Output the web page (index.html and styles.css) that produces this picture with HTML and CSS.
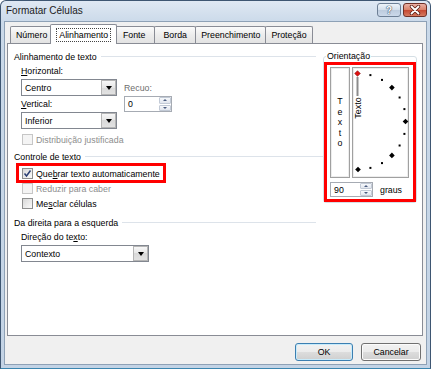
FILE: index.html
```html
<!DOCTYPE html>
<html lang="pt-BR">
<head>
    <meta charset="UTF-8">
    <title>Formatar Células</title>
    <link rel="stylesheet" href="styles.css">
</head>
<body>
    <div class="window">
        <div class="titlebar">
            <span class="title">Formatar Células</span>
            <div class="caption-buttons">
                <span class="cap-btn help">?</span>
                <span class="cap-btn close">
                    <svg width="12" height="10" viewBox="0 0 12 10">
                        <path d="M2.5 1.5 L9.5 8.5 M9.5 1.5 L2.5 8.5" stroke="#5a1f16" stroke-width="3.4" stroke-linecap="round"/>
                        <path d="M2.5 1.5 L9.5 8.5 M9.5 1.5 L2.5 8.5" stroke="#fff" stroke-width="1.8" stroke-linecap="round"/>
                    </svg>
                </span>
            </div>
        </div>

        <div class="client">
            <div class="tabs">
                <span class="tab">Número</span>
                <span class="tab active"><span class="focus">Alinhamento</span></span>
                <span class="tab">Fonte</span>
                <span class="tab">Borda</span>
                <span class="tab">Preenchimento</span>
                <span class="tab">Proteção</span>
            </div>

            <div class="panel">
                <div class="left-col">
                    <div class="group-head">Alinhamento de texto</div>
                    <div class="section align-grid">
                        <div class="field-col">
                            <div class="field-label"><u>H</u>orizontal:</div>
                            <div class="combo w-short">
                                <span class="combo-value">Centro</span>
                                <span class="combo-drop"><i class="tri"></i></span>
                            </div>
                            <div class="field-label gap1"><u>V</u>ertical:</div>
                            <div class="combo w-short">
                                <span class="combo-value">Inferior</span>
                                <span class="combo-drop"><i class="tri"></i></span>
                            </div>
                        </div>
                        <div class="field-col recuo">
                            <div class="field-label disabled">Recuo:</div>
                            <div class="spin">
                                <span class="spin-value">0</span>
                                <span class="spin-btns">
                                    <span class="spin-half"><i class="tri-up"></i></span>
                                    <span class="spin-half"><i class="tri-down"></i></span>
                                </span>
                            </div>
                        </div>
                    </div>
                    <div class="section">
                        <div class="check disabled first-check"><span class="box"></span>Distribuição justificada</div>
                    </div>

                    <div class="group-head wide gap2">Controle de texto</div>
                    <div class="section checks">
                        <div class="check annot">
                            <span class="box">
                                <svg width="9" height="9" viewBox="0 0 9 9"><path d="M1.5 4.5 L3.5 7 L7.5 1.5" fill="none" stroke="#2b3f73" stroke-width="1.5"/></svg>
                            </span>
                            <span>Que<u>b</u>rar texto automaticamente</span>
                        </div>
                        <div class="check disabled"><span class="box"></span>Reduzir para caber</div>
                        <div class="check"><span class="box"></span><span>Me<u>s</u>clar células</span></div>
                    </div>

                    <div class="group-head gap4">Da direita para a esquerda</div>
                    <div class="section">
                        <div class="field-label">Direção do te<u>x</u>to:</div>
                        <div class="combo w-long">
                            <span class="combo-value">Contexto</span>
                            <span class="combo-drop"><i class="tri"></i></span>
                        </div>
                    </div>
                </div>

                <div class="orient-group">
                    <div class="orient-title">Orientação</div>
                    <div class="orient-box">
                        <div class="dial-row">
                            <div class="texto-box">
                                <span>T</span><span>e</span><span>x</span><span>t</span><span>o</span>
                            </div>
                            <div class="dial">
                                <svg width="55" height="109" viewBox="0 0 55 109">
                                    <line x1="4.5" y1="9" x2="4.5" y2="28" stroke="#8c8c8c" stroke-width="2"/>
                                    <text transform="translate(7.5 40) rotate(-90)" text-anchor="middle" font-family="Liberation Sans, Arial, sans-serif" font-size="9" fill="#000">Texto</text>
                                    <g fill="#000">
                                        <rect x="16.4" y="6.1" width="2" height="2"/>
                                        <rect x="28" y="10.9" width="2" height="2"/>
                                        <rect x="45.6" y="28.5" width="2" height="2"/>
                                        <rect x="50.4" y="40.1" width="2" height="2"/>
                                        <rect x="50.4" y="64.9" width="2" height="2"/>
                                        <rect x="45.6" y="76.5" width="2" height="2"/>
                                        <rect x="28" y="94.1" width="2" height="2"/>
                                        <rect x="16.4" y="98.9" width="2" height="2"/>
                                        <polygon points="38.9,16.8 41.7,19.6 38.9,22.4 36.1,19.6"/>
                                        <polygon points="52.5,50.7 55.3,53.5 52.5,56.3 49.7,53.5"/>
                                        <polygon points="38.9,84.6 41.7,87.4 38.9,90.2 36.1,87.4"/>
                                        <polygon points="5,98.7 7.8,101.5 5,104.3 2.2,101.5"/>
                                    </g>
                                    <polygon points="4.5,2.7 7.3,5.5 4.5,8.3 1.7,5.5" fill="#e01010" stroke="#7a1010" stroke-width="0.6"/>
                                </svg>
                            </div>
                        </div>
                        <div class="deg-row">
                            <div class="spin w-deg">
                                <span class="spin-value">90</span>
                                <span class="spin-btns">
                                    <span class="spin-half"><i class="tri-up"></i></span>
                                    <span class="spin-half"><i class="tri-down"></i></span>
                                </span>
                            </div>
                            <span><u>g</u>raus</span>
                        </div>
                    </div>
                </div>
            </div>

            <div class="actions">
                <button class="btn default">OK</button>
                <button class="btn wide-btn">Cancelar</button>
            </div>
        </div>
    </div>
</body>
</html>
```

FILE: styles.css
```css
body {
    margin: 0;
    font-family: "Liberation Sans", Arial, sans-serif;
    font-size: 8.8px;
    color: #000;
    background: #fff;
}
u {
    text-decoration-thickness: 1px;
    text-underline-offset: 1px;
}
.window {
    width: 431px;
    height: 369px;
    box-sizing: border-box;
    border: 1px solid #3e5672;
    border-bottom-color: #3b86b0;
    border-radius: 6px 6px 0 0;
    background: linear-gradient(#dfe8f3, #cad9e9 22px, #c3d3e5);
    padding: 0 3px 3px;
    display: flex;
    flex-direction: column;
}
.titlebar {
    height: 20px;
    display: flex;
    justify-content: space-between;
    padding-left: 2px;
}
.title {
    font-size: 10px;
    line-height: 20px;
    color: #1b1b1b;
}
.caption-buttons {
    display: flex;
    gap: 2px;
    margin-top: 2px;
}
.cap-btn {
    width: 24px;
    height: 14px;
    box-sizing: border-box;
    border: 1px solid #6d7f95;
    border-radius: 3px;
    display: flex;
    align-items: center;
    justify-content: center;
}
.help {
    background: linear-gradient(#eef3f9, #d3deeb 50%, #bccbdd 50%, #cbd9ea);
    color: #fff;
    font-weight: bold;
    font-size: 10px;
    text-shadow: 0 0 1px #44566d, 0 0 1px #44566d, 0 0 1px #44566d;
}
.close {
    background: linear-gradient(#eab0a4, #d98068 50%, #c5462f 50%, #d57a60);
    border-color: #6e3027;
}
.client {
    flex: 1;
    background: #f0f0f0;
    border: 1px solid #8ea1b6;
    padding: 2px 3px 0 2px;
    display: flex;
    flex-direction: column;
}

/* tabs */
.tabs {
    display: flex;
    align-items: flex-end;
    height: 20px;
    padding-left: 4px;
    margin-bottom: -1px;
    position: relative;
    z-index: 1;
}
.tab {
    height: 17px;
    min-width: 42px;
    margin-bottom: 1px;
    margin-left: -1px;
    box-sizing: border-box;
    padding: 0 5px;
    border: 1px solid #898c95;
    border-bottom: none;
    border-radius: 2px 2px 0 0;
    background: linear-gradient(#fbfbfb, #ececec 50%, #e3e3e3);
    display: flex;
    align-items: center;
    justify-content: center;
}
.tab.active {
    height: 20px;
    margin: 0 -3px;
    padding: 0 5px;
    background: #fff;
    position: relative;
    z-index: 2;
}
.focus {
    border: 1px dotted #444;
    padding: 1px 2px;
}

/* panel */
.panel {
    height: 293px;
    box-sizing: border-box;
    border: 1px solid #898c95;
    background: #fff;
    padding: 5px 5px 0 6px;
    display: grid;
    grid-template-columns: 302px 94px;
    column-gap: 7px;
    align-items: start;
}
.left-col {
    display: flex;
    flex-direction: column;
}
.group-head {
    display: flex;
    align-items: center;
    gap: 4px;
    height: 15px;
}
.group-head::after {
    content: "";
    flex: 1;
    border-top: 1px solid #dde3ea;
}
.group-head.wide {
    margin-right: -7px;
}
.gap1 { margin-top: 1px; }
.gap2 { margin-top: 2px; }
.gap4 { margin-top: 4px; }
.section {
    padding-left: 7px;
    display: flex;
    flex-direction: column;
}
.align-grid {
    flex-direction: row;
    gap: 7px;
}
.field-col {
    display: flex;
    flex-direction: column;
}
.recuo {
    padding-top: 17px;
}
.field-label {
    height: 15px;
    line-height: 15px;
}
.disabled {
    color: #8d8d8d;
}
.field-label.disabled {
    color: #6d6d6d;
}

/* combo boxes */
.combo {
    display: flex;
    align-items: center;
    height: 17px;
    box-sizing: border-box;
    border: 1px solid #828790;
    background: #fff;
}
.w-short { width: 96px; }
.w-long { width: 128px; }
.combo-value {
    flex: 1;
    padding-left: 3px;
}
.combo-drop {
    width: 15px;
    height: 15px;
    box-sizing: border-box;
    border: 1px solid #b5b5b5;
    background: linear-gradient(#f7f7f7, #e6e6e6 50%, #d9d9d9 50%, #e2e2e2);
    display: flex;
    align-items: center;
    justify-content: center;
}
.tri {
    width: 0;
    height: 0;
    border-left: 3px solid transparent;
    border-right: 3px solid transparent;
    border-top: 4px solid #000;
}

/* spin boxes */
.spin {
    display: flex;
    width: 48px;
    height: 16px;
    box-sizing: border-box;
    border: 1px solid #a6abb3;
    background: #fff;
}
.w-deg {
    width: 43px;
    height: 15px;
}
.spin-value {
    flex: 1;
    padding-left: 3px;
    display: flex;
    align-items: center;
}
.spin-btns {
    width: 12px;
    display: flex;
    flex-direction: column;
    gap: 1px;
}
.spin-half {
    flex: 1;
    border: 1px solid #c2cad6;
    border-radius: 1px;
    background: linear-gradient(#f6f8fb, #e1e6ee);
    display: flex;
    align-items: center;
    justify-content: center;
}
.tri-up,
.tri-down {
    width: 0;
    height: 0;
    border-left: 2px solid transparent;
    border-right: 2px solid transparent;
}
.tri-up { border-bottom: 2px solid #4b5d80; }
.tri-down { border-top: 2px solid #4b5d80; }

/* checkboxes */
.check {
    display: flex;
    align-items: center;
    gap: 3px;
    height: 15px;
    padding-left: 1px;
}
.first-check {
    margin-top: 3px;
}
.checks {
    margin-top: 2px;
}
.box {
    width: 11px;
    height: 11px;
    box-sizing: border-box;
    border: 1px solid #8e8f8f;
    background: linear-gradient(135deg, #d8d8d8, #fbfbfb);
    display: flex;
    align-items: center;
    justify-content: center;
}
.check.disabled .box {
    border-color: #c6c6c6;
    background: #f4f4f4;
}
.annot {
    position: relative;
}
.annot::after {
    content: "";
    position: absolute;
    left: -5px;
    top: -3px;
    width: 150px;
    height: 20px;
    box-sizing: border-box;
    border: 3px solid #f00;
}

/* orientation */
.orient-group {
    margin-top: 7px;
    border: 1px solid #d5dfe5;
    border-radius: 3px;
    display: flex;
    flex-direction: column;
}
.orient-title {
    align-self: flex-start;
    height: 15px;
    line-height: 15px;
    margin: -8px 0 0 2px;
    padding: 0 1px;
    background: #fff;
}
.orient-box {
    margin-top: -2px;
    border: 3px solid #f00;
    padding: 2px 3px 2px 3px;
}
.dial-row {
    display: flex;
    gap: 2px;
    height: 111px;
}
.texto-box,
.dial {
    box-sizing: border-box;
    border: 1px solid #a0a0a0;
    box-shadow: inset 0 0 0 1px #ededed;
}
.texto-box {
    width: 20px;
    display: flex;
    flex-direction: column;
    align-items: center;
    justify-content: center;
    line-height: 10.5px;
}
.dial {
    width: 57px;
}
.dial svg {
    display: block;
    overflow: visible;
}
.deg-row {
    display: flex;
    align-items: center;
    gap: 7px;
    margin-top: 4px;
}

/* buttons */
.actions {
    display: flex;
    justify-content: flex-end;
    gap: 8px;
    margin-top: 7px;
    padding-right: 2px;
}
.btn {
    width: 58px;
    height: 18px;
    padding: 0;
    font: inherit;
    color: #000;
    border: 1px solid #707070;
    border-radius: 3px;
    background: linear-gradient(#f2f2f2, #ebebeb 50%, #dddddd 50%, #cfcfcf);
    box-shadow: inset 0 0 0 1px #fbfbfb;
}
.btn.default {
    border-color: #3c7fb1;
    box-shadow: inset 0 0 0 1px #c7ebfb;
}
.wide-btn {
    width: 60px;
}
```
